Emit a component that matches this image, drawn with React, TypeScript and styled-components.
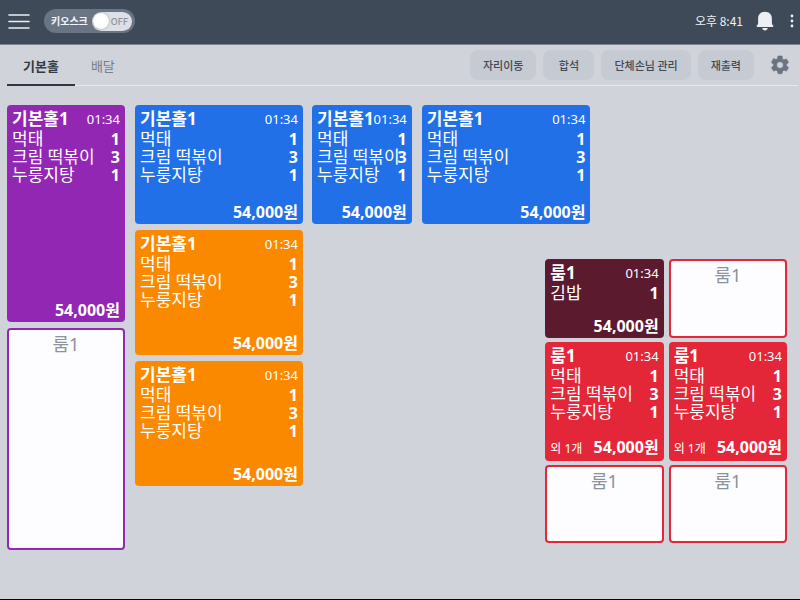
import React, { useState } from "react";
import styled, { createGlobalStyle } from "styled-components";

const GlobalStyle = createGlobalStyle`
  * { box-sizing: border-box; }
  body {
    margin: 0;
    background: #d0d3da;
    font-family: "Noto Sans", "Noto Sans CJK KR", sans-serif;
  }
  button { font: inherit; cursor: pointer; }
`;

const Page = styled.div`
  display: flex;
  flex-direction: column;
  min-height: 100vh;
  background: #d0d3da;
  border-bottom: 1px solid #050608;
`;

const TopBar = styled.header`
  display: flex;
  align-items: center;
  height: 45px;
  padding: 0 5px 2px 8px;
  background: #3f4a59;
  border-bottom: 1px solid #7e8691;
  color: #eceff4;
`;

const IconButton = styled.button`
  display: flex;
  align-items: center;
  justify-content: center;
  padding: 0;
  border: 0;
  background: none;
  color: inherit;
`;

const KioskToggle = styled.label`
  display: flex;
  align-items: center;
  gap: 4px;
  height: 24px;
  margin: 0 auto 0 14px;
  padding: 0 3px 0 7px;
  border-radius: 12px;
  background: #697484;
  color: #f4f6f9;
  font: 700 10px/24px "Noto Sans CJK KR", sans-serif;
  cursor: pointer;
`;

const Switch = styled.span`
  position: relative;
  display: flex;
  align-items: center;
  width: 40px;
  height: 19px;
  padding: 0 0 0 19px;
  border-radius: 10px;
  background: #dcdfe5;
  color: #8b919b;
  font: 500 9px/19px Inter, "Noto Sans", sans-serif;
`;

const SwitchInput = styled.input`
  position: absolute;
  inset: 0;
  margin: 0;
  appearance: none;
  border-radius: 10px;
  cursor: pointer;

  &::before {
    content: "";
    display: block;
    width: 16px;
    height: 16px;
    margin: 1px;
    border-radius: 50%;
    background: #fff;
    box-shadow: 0 0 2px #8b919b;
  }
  &:checked::before { margin-left: 23px; }
`;

const Clock = styled.time`
  margin-right: 13px;
  font: 400 12px/20px "Noto Sans CJK KR", sans-serif;
`;

const MoreButton = styled(IconButton)`
  margin-left: 15px;
`;

const NavBar = styled.nav`
  display: flex;
  align-items: stretch;
  height: 41px;
  margin: 0 2px 0 7px;
  border-bottom: 1px solid #e6e9ee;
  font-family: "Noto Sans CJK KR", sans-serif;
`;

const Tab = styled.button<{ $active?: boolean }>`
  height: 41px;
  padding: 3px 16px 0;
  border: 0;
  border-bottom: 2px solid ${(p) => (p.$active ? "#303646" : "transparent")};
  background: none;
  color: ${(p) => (p.$active ? "#303a48" : "#747d8a")};
  font-size: 13px;
  line-height: 20px;
  font-weight: ${(p) => (p.$active ? 700 : 400)};
`;

const Actions = styled.div`
  display: flex;
  align-items: center;
  gap: 7px;
  margin-left: auto;
  padding-right: 8px;
`;

const ActionButton = styled.button`
  min-width: 51px;
  height: 30px;
  padding: 0 13px;
  border: 0;
  border-radius: 8px;
  background: #c6cad2;
  color: #3f4957;
  font-size: 11px;
  line-height: 20px;
  font-weight: 500;
`;

const SettingsButton = styled(IconButton)`
  margin-left: 9px;
  color: #697382;
`;

const Floor = styled.main`
  display: grid;
  grid-template-columns: 118fr 168fr 474fr;
  column-gap: 10px;
  align-items: start;
  padding: 19px 13px 24px 7px;
`;

const Zone = styled.section`
  display: grid;
  gap: 6px;
`;

const Hall = styled.section`
  display: grid;
  gap: 35px;
`;

const HallRow = styled.div`
  display: grid;
  grid-template-columns: 100fr 169fr 187fr;
  column-gap: 10px;
  margin-left: -1px;
`;

const Rooms = styled.div`
  display: grid;
  grid-template-columns: 1fr 1fr;
  gap: 4px 5px;
  width: 51%;
  margin-left: auto;
`;

const Seat = styled.button<{ $color: string; $height: number; $empty?: boolean }>`
  display: flex;
  flex-direction: column;
  align-items: stretch;
  min-width: 0;
  min-height: ${(p) => p.$height}px;
  padding: 2px 3px 0;
  border: 2px solid ${(p) => p.$color};
  border-radius: 4px;
  background: ${(p) => (p.$empty ? "#fdfdff" : p.$color)};
  color: ${(p) => (p.$empty ? "#8b929d" : "#fff")};
  font-size: 18px;
  line-height: 24px;
  text-align: ${(p) => (p.$empty ? "center" : "left")};
  white-space: nowrap;
`;

const Line = styled.span`
  display: flex;
  justify-content: space-between;
  line-height: 18px;
`;

const SeatHead = styled(Line)`
  margin-bottom: 1px;
  line-height: 20px;
`;

const SeatName = styled.strong`
  min-width: 0;
  font-size: 17px;
  font-weight: 700;
`;

const Elapsed = styled.time`
  font-size: 13px;
`;

const Dish = styled.span`
  min-width: 0;
  font-size: 17px;
  font-weight: 400;
`;

const Quantity = styled.strong`
  font-size: 16px;
  font-weight: 700;
`;

const SeatFoot = styled(Line)`
  margin-top: auto;
  align-items: baseline;
  line-height: 20px;
`;

const Extra = styled.span`
  font-size: 12px;
`;

const Total = styled.strong`
  margin-left: auto;
  font-size: 16px;
  font-weight: 700;
`;

type Order = [string, number];

const PURPLE = "#9127b2";
const BLUE = "#2170e8";
const ORANGE = "#fb8900";
const RED = "#e42639";
const WINE = "#5c1a2e";

const hallOrders: Order[] = [
  ["먹태", 1],
  ["크림 떡볶이", 3],
  ["누룽지탕", 1],
];

interface SeatProps {
  name: string;
  color: string;
  height: number;
  orders?: Order[];
  extra?: string;
}

function SeatCard({ name, color, height, orders, extra }: SeatProps) {
  if (!orders) {
    return (
      <Seat type="button" $color={color} $height={height} $empty>
        {name}
      </Seat>
    );
  }
  return (
    <Seat type="button" $color={color} $height={height}>
      <SeatHead>
        <SeatName>{name}</SeatName>
        <Elapsed>01:34</Elapsed>
      </SeatHead>
      {orders.map(([dish, count]) => (
        <Line key={dish}>
          <Dish>{dish}</Dish>
          <Quantity>{count}</Quantity>
        </Line>
      ))}
      <SeatFoot>
        {extra && <Extra>{extra}</Extra>}
        <Total>54,000원</Total>
      </SeatFoot>
    </Seat>
  );
}

const GEAR =
  "M19.14 12.94c.04-.3.06-.61.06-.94s-.02-.64-.07-.94l2.03-1.58a.49.49 0 0 0 .12-.61l-1.92-3.32a.49.49 0 0 0-.59-.22l-2.39.96a7 7 0 0 0-1.62-.94l-.36-2.54A.48.48 0 0 0 13.92 2h-3.84a.48.48 0 0 0-.47.41l-.36 2.54a7 7 0 0 0-1.62.94l-2.39-.96a.48.48 0 0 0-.59.22L2.74 8.87a.48.48 0 0 0 .12.61l2.03 1.58a6 6 0 0 0 0 1.88l-2.03 1.58a.49.49 0 0 0-.12.61l1.92 3.32c.12.22.37.29.59.22l2.39-.96a7 7 0 0 0 1.62.94l.36 2.54c.05.24.24.41.48.41h3.84c.24 0 .44-.17.47-.41l.36-2.54a7 7 0 0 0 1.62-.94l2.39.96c.22.08.47 0 .59-.22l1.92-3.32a.48.48 0 0 0-.12-.61zM12 15.6a3.6 3.6 0 1 1 0-7.2 3.6 3.6 0 0 1 0 7.2z";

export default function App() {
  const [kiosk, setKiosk] = useState(false);
  const [tab, setTab] = useState("기본홀");

  return (
    <>
      <GlobalStyle />
      <Page>
        <TopBar>
          <IconButton type="button" aria-label="메뉴">
            <svg width="22" height="16" viewBox="0 0 22 16" stroke="currentColor" strokeWidth="1.6" strokeLinecap="round">
              <path d="M1 2h20M1 8.500h20M1 15h20" />
            </svg>
          </IconButton>
          <KioskToggle>
            키오스크
            <Switch>
              <SwitchInput
                type="checkbox"
                role="switch"
                checked={kiosk}
                onChange={(e) => setKiosk(e.target.checked)}
              />
              {kiosk ? "" : "OFF"}
            </Switch>
          </KioskToggle>
          <Clock>오후 8:41</Clock>
          <IconButton type="button" aria-label="알림">
            <svg width="18" height="20" viewBox="0 0 18 20" fill="currentColor">
              <path d="M9 .8C5 .8 2.1 3.6 2.1 7.5V12c0 1.2-.5 1.8-1.3 2.5-.5.5-.2 1.5.6 1.5h15.2c.8 0 1.1-1 .6-1.5-.8-.7-1.3-1.3-1.3-2.5V7.500C15.900 3.600 13 .8 9 .8z" />
              <path d="M6.200 17h5.600c-.3 1.500-1.300 2.400-2.800 2.400S6.500 18.500 6.200 17z" />
            </svg>
          </IconButton>
          <MoreButton type="button" aria-label="더보기">
            <svg width="6" height="16" viewBox="0 0 6 16" fill="currentColor">
              <circle cx="3" cy="3" r="1.400" />
              <circle cx="3" cy="8" r="1.400" />
              <circle cx="3" cy="13" r="1.400" />
            </svg>
          </MoreButton>
        </TopBar>

        <NavBar>
          {["기본홀", "배달"].map((label) => (
            <Tab key={label} type="button" $active={tab === label} onClick={() => setTab(label)}>
              {label}
            </Tab>
          ))}
          <Actions>
            {["자리이동", "합석", "단체손님 관리", "재출력"].map((label) => (
              <ActionButton key={label} type="button">
                {label}
              </ActionButton>
            ))}
            <SettingsButton type="button" aria-label="설정">
              <svg width="20" height="20" viewBox="1 1 22 22" fill="currentColor">
                <path d={GEAR} stroke="currentColor" strokeWidth="0.600" />
              </svg>
            </SettingsButton>
          </Actions>
        </NavBar>

        <Floor>
          <Zone>
            <SeatCard name="기본홀1" color={PURPLE} height={217} orders={hallOrders} />
            <SeatCard name="룸1" color={PURPLE} height={222} />
          </Zone>
          <Zone>
            <SeatCard name="기본홀1" color={BLUE} height={119} orders={hallOrders} />
            <SeatCard name="기본홀1" color={ORANGE} height={125} orders={hallOrders} />
            <SeatCard name="기본홀1" color={ORANGE} height={125} orders={hallOrders} />
          </Zone>
          <Hall>
            <HallRow>
              <SeatCard name="기본홀1" color={BLUE} height={119} orders={hallOrders} />
              <SeatCard name="기본홀1" color={BLUE} height={119} orders={hallOrders} />
            </HallRow>
            <Rooms>
              <SeatCard name="룸1" color={WINE} height={79} orders={[["김밥", 1]]} />
              <SeatCard name="룸1" color={RED} height={79} />
              <SeatCard name="룸1" color={RED} height={119} orders={hallOrders} extra="외 1개" />
              <SeatCard name="룸1" color={RED} height={119} orders={hallOrders} extra="외 1개" />
              <SeatCard name="룸1" color={RED} height={78} />
              <SeatCard name="룸1" color={RED} height={78} />
            </Rooms>
          </Hall>
        </Floor>
      </Page>
    </>
  );
}
